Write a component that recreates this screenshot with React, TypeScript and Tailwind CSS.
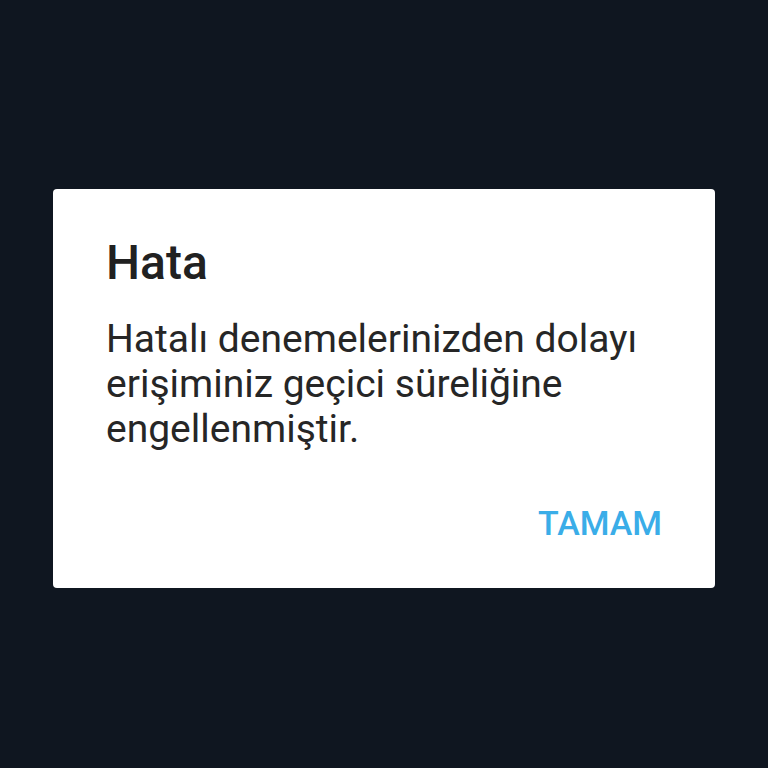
export default function App() {
  return (
    <div
      className="flex h-[768px] w-[768px] justify-center bg-[#0f1620] pt-[189px]"
      style={{ fontFamily: "Roboto, 'Noto Sans', sans-serif" }}
    >
      <div className="flex h-[399px] w-[662px] flex-col rounded-[4px] bg-white pl-[53px] pr-[53px] pt-[46px]">
        <h2 className="text-[48px] font-medium leading-[56px] text-[#212121]">Hata</h2>
        <p className="mt-[26px] text-[39px] leading-[45px] text-[#262626]">
          Hatalı denemelerinizden dolayı erişiminiz geçici süreliğine engellenmiştir.
        </p>
        <div className="mt-auto flex justify-end pb-[45px]">
          <button className="text-[34px] font-medium leading-[40px] text-[#3aade8]">TAMAM</button>
        </div>
      </div>
    </div>
  );
}
